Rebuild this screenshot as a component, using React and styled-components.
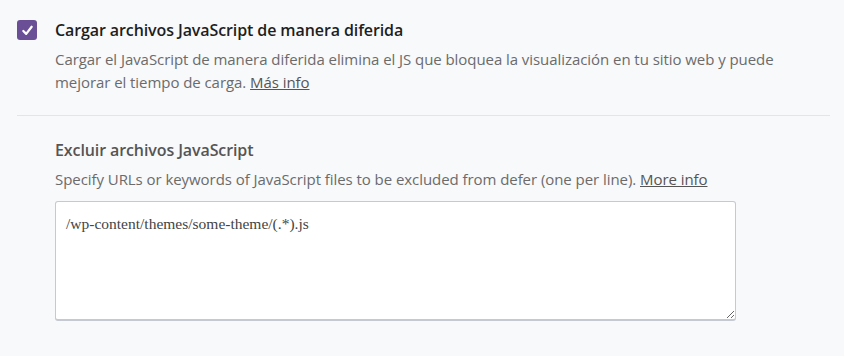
import styled, { createGlobalStyle } from "styled-components";

const Global = createGlobalStyle`
  html, body {
    margin: 0;
    padding: 0;
    background: #f8f9fb;
  }
  body {
    font-family: "Open Sans", "Noto Sans", sans-serif;
  }
`;

const Page = styled.div`
  padding: 18px 14px 0 17px;
`;

const Option = styled.div`
  display: flex;
  align-items: flex-start;
  gap: 18px;
  padding-bottom: 21px;
  border-bottom: 1px solid #e3e5e9;
`;

const Check = styled.span`
  flex: none;
  width: 20px;
  height: 20px;
  margin-top: 2px;
  border-radius: 3px;
  background: #6a4f97;
  display: flex;
  align-items: center;
  justify-content: center;
`;

const Body = styled.div`
  flex: 1;
`;

const Title = styled.div`
  font-size: 16px;
  font-weight: 600;
  letter-spacing: -0.1px;
  color: ${(p) => p.$color || "#1e1e1e"};
  line-height: 24px;
`;

const Desc = styled.p`
  margin: 6px 0 0;
  font-size: 15px;
  letter-spacing: -0.06px;
  line-height: 23px;
  color: #6b6b6b;
  max-width: 740px;

  a {
    color: #555;
    text-decoration: underline;
  }
`;

const Sub = styled.div`
  padding: 22px 0 0 38px;
`;

const Area = styled.textarea`
  display: block;
  box-sizing: border-box;
  margin-top: 10px;
  width: 681px;
  height: 120px;
  padding: 13px 10px;
  border: 1px solid #c4c9d2;
  border-bottom-width: 2px;
  border-radius: 3px;
  background: #fff;
  font-family: "Liberation Serif", serif;
  font-size: 15.5px;
  color: #444;
  resize: vertical;
  outline: none;
`;

export default function App() {
  return (
    <Page>
      <Global />
      <Option>
        <Check>
          <svg width="13" height="13" viewBox="0 0 14 14">
            <path d="M2.5 7.5 L5.6 10.6 L11.5 3" fill="none" stroke="#fff" strokeWidth="2.4" strokeLinecap="round" strokeLinejoin="round" />
          </svg>
        </Check>
        <Body>
          <Title>Cargar archivos JavaScript de manera diferida</Title>
          <Desc>
            Cargar el JavaScript de manera diferida elimina el JS que bloquea la visualización en tu sitio web y puede mejorar el tiempo de carga. <a href="#">Más info</a>
          </Desc>
        </Body>
      </Option>
      <Sub>
        <Title $color="#555">Excluir archivos JavaScript</Title>
        <Desc>
          Specify URLs or keywords of JavaScript files to be excluded from defer (one per line). <a href="#">More info</a>
        </Desc>
        <Area defaultValue="/wp-content/themes/some-theme/(.*).js" />
      </Sub>
    </Page>
  );
}
